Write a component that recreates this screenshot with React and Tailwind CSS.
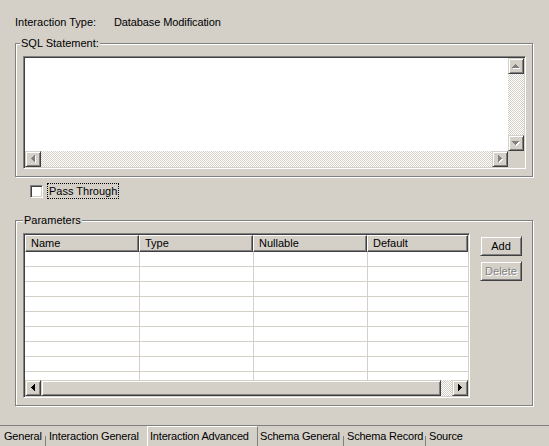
import React from 'react';

// Windows classic bevels
const raised =
  'bg-[#d4d0c8] border border-t-[#d4d0c8] border-l-[#d4d0c8] border-r-[#404040] border-b-[#404040] shadow-[inset_1px_1px_0_#ffffff,inset_-1px_-1px_0_#808080]';
const sunken =
  'border border-t-[#808080] border-l-[#808080] border-r-white border-b-white shadow-[inset_1px_1px_0_#404040,inset_-1px_-1px_0_#d4d0c8] p-px';
const track = 'bg-[image:repeating-conic-gradient(#ffffff_0_25%,#d4d0c8_0_50%)] bg-[length:2px_2px]';
const group = 'border border-[#808080] shadow-[inset_1px_1px_0_#ffffff,1px_1px_0_#ffffff]';

const Arrow = ({ dir, disabled }) => {
  const rects = [0, 1, 2, 3].map((i) => {
    if (dir === 'up') return { x: 3 - i, y: i, w: 2 * i + 1, h: 1 };
    if (dir === 'down') return { x: 3 - i, y: 3 - i, w: 2 * i + 1, h: 1 };
    if (dir === 'left') return { x: i, y: 3 - i, w: 1, h: 2 * i + 1 };
    return { x: 3 - i, y: 3 - i, w: 1, h: 2 * i + 1 };
  });
  const horiz = dir === 'up' || dir === 'down';
  return (
    <svg width={horiz ? 8 : 5} height={horiz ? 5 : 8} shapeRendering="crispEdges">
      {disabled &&
        rects.map((r, i) => (
          <rect key={'s' + i} x={r.x + 1} y={r.y + 1} width={r.w} height={r.h} fill="#ffffff" />
        ))}
      {rects.map((r, i) => (
        <rect key={i} x={r.x} y={r.y} width={r.w} height={r.h} fill={disabled ? '#808080' : '#000000'} />
      ))}
    </svg>
  );
};

const ScrollButton = ({ dir, disabled }) => (
  <div className={`${raised} w-4 h-4 shrink-0 flex items-center justify-center`}>
    <Arrow dir={dir} disabled={disabled} />
  </div>
);

const columns = ['Name', 'Type', 'Nullable', 'Default'];

const App = () => {
  return (
    <div className="w-[549px] h-[446px] bg-[#d4d0c8] flex flex-col font-['Liberation_Sans',Arial,sans-serif] text-[11px] leading-[13px] text-black whitespace-nowrap overflow-hidden">
      <div className="flex pt-[16px] pl-[15px]">
        <span className="w-[99px]">Interaction Type:</span>
        <span className="tracking-[-0.1px]">Database Modification</span>
      </div>

      {/* SQL Statement */}
      <fieldset className={`${group} ml-[15px] mt-[8px] w-[518px] pl-[7px] pr-[6px] pt-[6px] pb-[7px]`}>
        <legend className="-ml-[3px] px-px bg-[#d4d0c8]">SQL Statement:</legend>
        <div className={`${sunken} w-[503px] h-[113px] flex flex-col`}>
          <div className="flex flex-1 min-h-0">
            <div className="flex-1 bg-white" />
            <div className="w-4 flex flex-col">
              <ScrollButton dir="up" disabled />
              <div className={`flex-1 ${track}`} />
              <ScrollButton dir="down" disabled />
            </div>
          </div>
          <div className="flex h-4">
            <ScrollButton dir="left" disabled />
            <div className={`flex-1 ${track}`} />
            <ScrollButton dir="right" disabled />
            <div className="w-4 h-4 bg-[#d4d0c8]" />
          </div>
        </div>
      </fieldset>

      <div className="flex items-center h-[16px] mt-[6px] pl-[30px]">
        <div className="w-[13px] h-[13px] bg-white border border-t-[#808080] border-l-[#808080] border-r-white border-b-white shadow-[inset_1px_1px_0_#404040,inset_-1px_-1px_0_#d4d0c8]" />
        <span className="ml-[4px] h-[16px] px-px border border-dotted border-black leading-[14px]">Pass Through</span>
      </div>

      {/* Parameters */}
      <fieldset className={`${group} ml-[15px] mt-[15px] w-[518px] pl-[7px] pr-[10px] pt-[6px] pb-[7px]`}>
        <legend className="px-px bg-[#d4d0c8]">Parameters</legend>
        <div className="flex items-start">
          <div className={`${sunken} w-[447px] h-[165px] flex flex-col bg-white`}>
            <div className="grid grid-cols-[114px_114px_114px_1fr] h-[17px]">
              {columns.map((c) => (
                <div
                  key={c}
                  className="bg-[#d4d0c8] border border-t-white border-l-white border-r-[#404040] border-b-[#404040] shadow-[inset_-1px_-1px_0_#808080] pl-[5px] leading-[14px]"
                >
                  {c}
                </div>
              ))}
            </div>
            <div className="flex-1 min-h-0 overflow-hidden">
              {Array.from({ length: 9 }).map((_, r) => (
                <div key={r} className="grid grid-cols-[114px_114px_114px_1fr] h-[15px] border-b border-[#d4d0c8]">
                  <div />
                  <div className="border-l border-[#d4d0c8]" />
                  <div className="border-l border-[#d4d0c8]" />
                  <div className="border-l border-[#d4d0c8]" />
                </div>
              ))}
            </div>
            <div className="flex h-4">
              <ScrollButton dir="left" />
              <div className={`${raised} w-[400px] h-4`} />
              <div className={`flex-1 ${track}`} />
              <ScrollButton dir="right" />
            </div>
          </div>
          <div className="ml-auto mt-[3px] flex flex-col gap-[5px]">
            <button className={`${raised} w-[42px] h-[20px] flex items-center justify-center`}>Add</button>
            <button className={`${raised} w-[42px] h-[20px] flex items-center justify-center text-[#808080] [text-shadow:1px_1px_0_#ffffff]`}>
              Delete
            </button>
          </div>
        </div>
      </fieldset>

      {/* bottom tabs */}
      <div className="mt-auto h-[21px] border-t border-[#808080] flex tracking-[-0.2px]">
        <div className="w-[45px] pl-[4px] pt-[4px]">General</div>
        <div className="w-px h-[10px] self-end bg-[#808080]" />
        <div className="w-[101px] pl-[3px] pt-[4px]">Interaction General</div>
        <div className="w-[111px] pl-[2px] pt-[3px] border-t border-l border-r border-t-white border-l-white border-r-[#808080]">
          Interaction Advanced
        </div>
        <div className="w-[85px] pl-[2px] pt-[4px]">Schema General</div>
        <div className="w-px h-[10px] self-end bg-[#808080]" />
        <div className="w-[81px] pl-[3px] pt-[4px]">Schema Record</div>
        <div className="w-px h-[10px] self-end bg-[#808080]" />
        <div className="pl-[3px] pt-[4px]">Source</div>
      </div>
    </div>
  );
};

export default App;
